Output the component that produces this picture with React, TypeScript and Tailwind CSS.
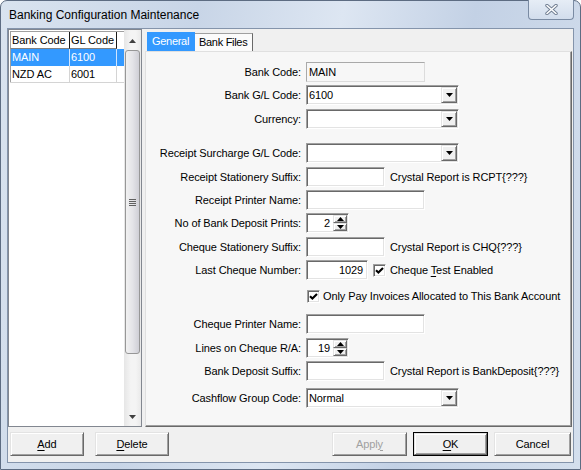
import type { ReactNode } from "react";

// Classic Win32 3D edges, built from borders + inset shadows.
const sunken =
  "border border-t-[#a0a0a0] border-l-[#a0a0a0] border-r-white border-b-white shadow-[inset_1px_1px_0_#696969,inset_-1px_-1px_0_#e3e3e3]";
const raised =
  "border border-t-[#e3e3e3] border-l-[#e3e3e3] border-r-[#696969] border-b-[#696969] shadow-[inset_1px_1px_0_#ffffff,inset_-1px_-1px_0_#a0a0a0] bg-[#f0f0f0]";

function Tri({ up = false, w = 7, h = 4, color = "#000" }: { up?: boolean; w?: number; h?: number; color?: string }) {
  return (
    <svg width={w} height={h} viewBox={`0 0 ${w} ${h}`} className="block">
      <polygon points={up ? `0,${h} ${w},${h} ${w / 2},0` : `0,0 ${w},0 ${w / 2},${h}`} fill={color} />
    </svg>
  );
}

function TextBox({ w, value = "", right = false }: { w: string; value?: string; right?: boolean }) {
  return (
    <div className={`flex h-[20px] items-center bg-white ${sunken} ${w} ${right ? "justify-end pr-[4px]" : "pl-[2px]"}`}>
      {value}
    </div>
  );
}

function Combo({ value = "" }: { value?: string }) {
  return (
    <div className={`flex h-[20px] w-[153px] items-stretch bg-white p-[1px] ${sunken}`}>
      <div className="flex flex-1 items-center pl-[1px]">{value}</div>
      <div className={`flex w-[16px] items-center justify-center ${raised}`}>
        <Tri />
      </div>
    </div>
  );
}

function Spin({ value }: { value: string }) {
  return (
    <div className={`flex h-[20px] w-[43px] items-stretch bg-white p-[1px] ${sunken}`}>
      <div className="w-[25px] self-center pr-[3px] text-right">{value}</div>
      <div className="flex w-[14px] flex-col">
        <div className={`flex flex-1 items-center justify-center ${raised}`}>
          <Tri up w={7} h={4} />
        </div>
        <div className={`flex flex-1 items-center justify-center ${raised}`}>
          <Tri w={7} h={4} />
        </div>
      </div>
    </div>
  );
}

function Check() {
  return (
    <div className={`flex h-[13px] w-[13px] items-center justify-center bg-white ${sunken}`}>
      <svg width="9" height="9" viewBox="0 0 9 9" className="block">
        <path d="M1 4.2 L3.4 6.6 L8 2" fill="none" stroke="#000" strokeWidth="2.1" />
      </svg>
    </div>
  );
}

function Row({ label, mt, children }: { label: string; mt: string; children: ReactNode }) {
  return (
    <div className={`flex h-[20px] items-center ${mt}`}>
      <div className="w-[155px] text-right">{label}</div>
      <div className="ml-[5px] flex items-center">{children}</div>
    </div>
  );
}

function Btn({ children, w, disabled = false, def = false }: { children: ReactNode; w: string; disabled?: boolean; def?: boolean }) {
  return (
    <div className={`h-[24px] ${w} ${def ? "border border-black" : ""}`}>
      <div className={`flex h-full w-full items-center justify-center ${raised} ${disabled ? "text-[#a0a0a0]" : "text-black"}`}>
        {children}
      </div>
    </div>
  );
}

export default function App() {
  return (
    <div className="h-[470px] w-[581px] overflow-hidden bg-white font-['Liberation_Sans',Arial,sans-serif] text-[11px] tracking-[-0.1px] text-black">
      <div className="flex h-full w-full flex-col rounded-t-[7px] border border-[#5d6c82] bg-[linear-gradient(100deg,#d9e3ef_0%,#c8d5e7_30%,#dde6f2_52%,#c3d1e5_72%,#d4dfed_100%)]">
        {/* title bar */}
        <div className="flex h-[27px] shrink-0 items-start">
          <span className="ml-[8px] mt-[7px] text-[12px] tracking-normal leading-[14px]">Banking Configuration Maintenance</span>
          <div className="-mt-px ml-auto mr-[6px] flex h-[20px] w-[46px] items-center justify-center rounded-b-[4px] border border-t-0 border-[#7a8ba3] bg-[linear-gradient(180deg,#e6edf6,#d2ddec)]">
            <svg width="13" height="11" viewBox="0 0 13 11" className="block">
              <path d="M2 1.5 L11 9.5 M11 1.5 L2 9.5" stroke="#6f7d91" strokeWidth="3.4" strokeLinecap="round" />
              <path d="M2 1.5 L11 9.5 M11 1.5 L2 9.5" stroke="#ffffff" strokeWidth="1.6" strokeLinecap="round" />
            </svg>
          </div>
        </div>

        {/* client area */}
        <div className="mx-[6px] flex flex-1 flex-col border border-[#8494ab] bg-[#f0f0f0]">
          <div className="flex h-[398px]">
            {/* bank list */}
            <div className="flex h-full w-[134px] border border-[#828790]">
              <div className="w-[115px] bg-white pl-[1px] pt-[1px]">
                <div className="flex h-[18px] border-t border-[#a0a0a0]">
                  <div className="flex w-[60px] items-center border-l border-r border-l-[#a0a0a0] border-r-[#1a1a1a] border-b border-b-[#808080] pl-[1px]">Bank Code</div>
                  <div className="flex w-[47px] items-center border-r border-r-[#1a1a1a] border-b border-b-[#808080] pl-[1px]">GL Code</div>
                </div>
                <div className="flex h-[17px] bg-[#3399ff] text-white">
                  <div className="flex w-[60px] items-center border-l border-r border-l-[#a0a0a0] border-r-[#cfe5ff] pl-[1px]">MAIN</div>
                  <div className="flex w-[47px] items-center border-r border-r-[#cfe5ff] pl-[1px]">6100</div>
                </div>
                <div className="flex h-[17px] border-b border-[#d4d4d4]">
                  <div className="flex w-[60px] items-center border-l border-r border-l-[#a0a0a0] border-r-[#d4d4d4] pl-[1px]">NZD AC</div>
                  <div className="flex w-[47px] items-center border-r border-r-[#d4d4d4] pl-[1px]">6001</div>
                </div>
              </div>
              {/* scrollbar */}
              <div className="flex w-[17px] flex-col bg-[linear-gradient(90deg,#e6e6e6,#f4f4f4_40%,#f4f4f4_70%,#e9e9e9)]">
                <div className="flex h-[17px] items-center justify-center pt-[4px]">
                  <Tri up w={7} h={4} color="#404040" />
                </div>
                <div className="mx-[1px] mt-[3px] flex h-[304px] items-center justify-center rounded-[3px] border border-[#979797] bg-[linear-gradient(90deg,#f1f1f1,#e4e4e8_50%,#cfcfd6)]">
                  <div className="flex flex-col gap-[1px]">
                    <div className="h-px w-[7px] bg-[#606060]" />
                    <div className="h-px w-[7px] bg-[#606060]" />
                    <div className="h-px w-[7px] bg-[#606060]" />
                    <div className="h-px w-[7px] bg-[#606060]" />
                  </div>
                </div>
                <div className="flex-1" />
                <div className="flex h-[17px] items-center justify-center pb-[2px]">
                  <Tri w={7} h={4} color="#404040" />
                </div>
              </div>
            </div>

            {/* tab control */}
            <div className="ml-[3px] mt-[3px] flex w-[427px] flex-col">
              <div className="flex h-[19px] items-end whitespace-nowrap tracking-[-0.3px]">
                <div className="ml-[2px] flex h-[19px] w-[48px] items-center bg-[#3399ff] pl-[5px] text-white">General</div>
                <div className="flex h-[18px] w-[58px] items-center border-t border-r border-t-[#a0a0a0] border-r-[#696969] bg-[#fbfbfb] pl-[4px]">Bank Files</div>
              </div>
              <div className="flex flex-1 flex-col border border-t-[#e0e0e0] border-l-[#e0e0e0] border-r-[#696969] border-b-[#696969] bg-[#f7f7f7] shadow-[inset_-1px_-1px_0_#a0a0a0]">
                <Row label="Bank Code:" mt="mt-[10px]">
                  <div className="flex h-[20px] w-[119px] items-center border border-t-[#a9a9a9] border-l-[#a9a9a9] border-r-[#dcdcdc] border-b-[#dcdcdc] pl-[2px]">MAIN</div>
                </Row>
                <Row label="Bank G/L Code:" mt="mt-[3px]">
                  <Combo value="6100" />
                </Row>
                <Row label="Currency:" mt="mt-[4px]">
                  <Combo />
                </Row>
                <Row label="Receipt Surcharge G/L Code:" mt="mt-[14px]">
                  <Combo />
                </Row>
                <Row label="Receipt Stationery Suffix:" mt="mt-[4px]">
                  <TextBox w="w-[79px]" />
                  <span className="ml-[5px]">Crystal Report is RCPT{"{???}"}</span>
                </Row>
                <Row label="Receipt Printer Name:" mt="mt-[3px]">
                  <TextBox w="w-[119px]" />
                </Row>
                <Row label="No of Bank Deposit Prints:" mt="mt-[3px]">
                  <Spin value="2" />
                </Row>
                <Row label="Cheque Stationery Suffix:" mt="mt-[4px]">
                  <TextBox w="w-[79px]" />
                  <span className="ml-[5px]">Crystal Report is CHQ{"{???}"}</span>
                </Row>
                <Row label="Last Cheque Number:" mt="mt-[3px]">
                  <TextBox w="w-[62px]" value="1029" right />
                  <div className="ml-[5px]">
                    <Check />
                  </div>
                  <span className="ml-[4px]">
                    Cheque <span className="underline underline-offset-[2px]">T</span>est Enabled
                  </span>
                </Row>
                <div className="mt-[10px] flex h-[13px] items-center pl-[161px]">
                  <Check />
                  <span className="ml-[3px]">Only Pay Invoices Allocated to This Bank Account</span>
                </div>
                <Row label="Cheque Printer Name:" mt="mt-[11px]">
                  <TextBox w="w-[119px]" />
                </Row>
                <Row label="Lines on Cheque R/A:" mt="mt-[4px]">
                  <Spin value="19" />
                </Row>
                <Row label="Bank Deposit Suffix:" mt="mt-[3px]">
                  <TextBox w="w-[79px]" />
                  <span className="ml-[5px]">Crystal Report is BankDeposit{"{???}"}</span>
                </Row>
                <Row label="Cashflow Group Code:" mt="mt-[7px]">
                  <Combo value="Normal" />
                </Row>
              </div>
            </div>
          </div>

          {/* buttons */}
          <div className="mt-[5px] flex items-start">
            <div className="ml-[2px]">
              <Btn w="w-[74px]">
                <span className="underline underline-offset-[2px]">A</span>dd
              </Btn>
            </div>
            <div className="ml-[11px]">
              <Btn w="w-[74px]">
                <span className="underline underline-offset-[2px]">D</span>elete
              </Btn>
            </div>
            <div className="ml-auto flex gap-[6px] pr-[2px]">
              <Btn w="w-[75px]" disabled>
                Appl<span className="underline underline-offset-[2px]">y</span>
              </Btn>
              <Btn w="w-[75px]" def>
                <span className="underline underline-offset-[2px]">O</span>K
              </Btn>
              <Btn w="w-[77px]">Cancel</Btn>
            </div>
          </div>
        </div>
        <div className="h-[6px] shrink-0" />
      </div>
    </div>
  );
}
